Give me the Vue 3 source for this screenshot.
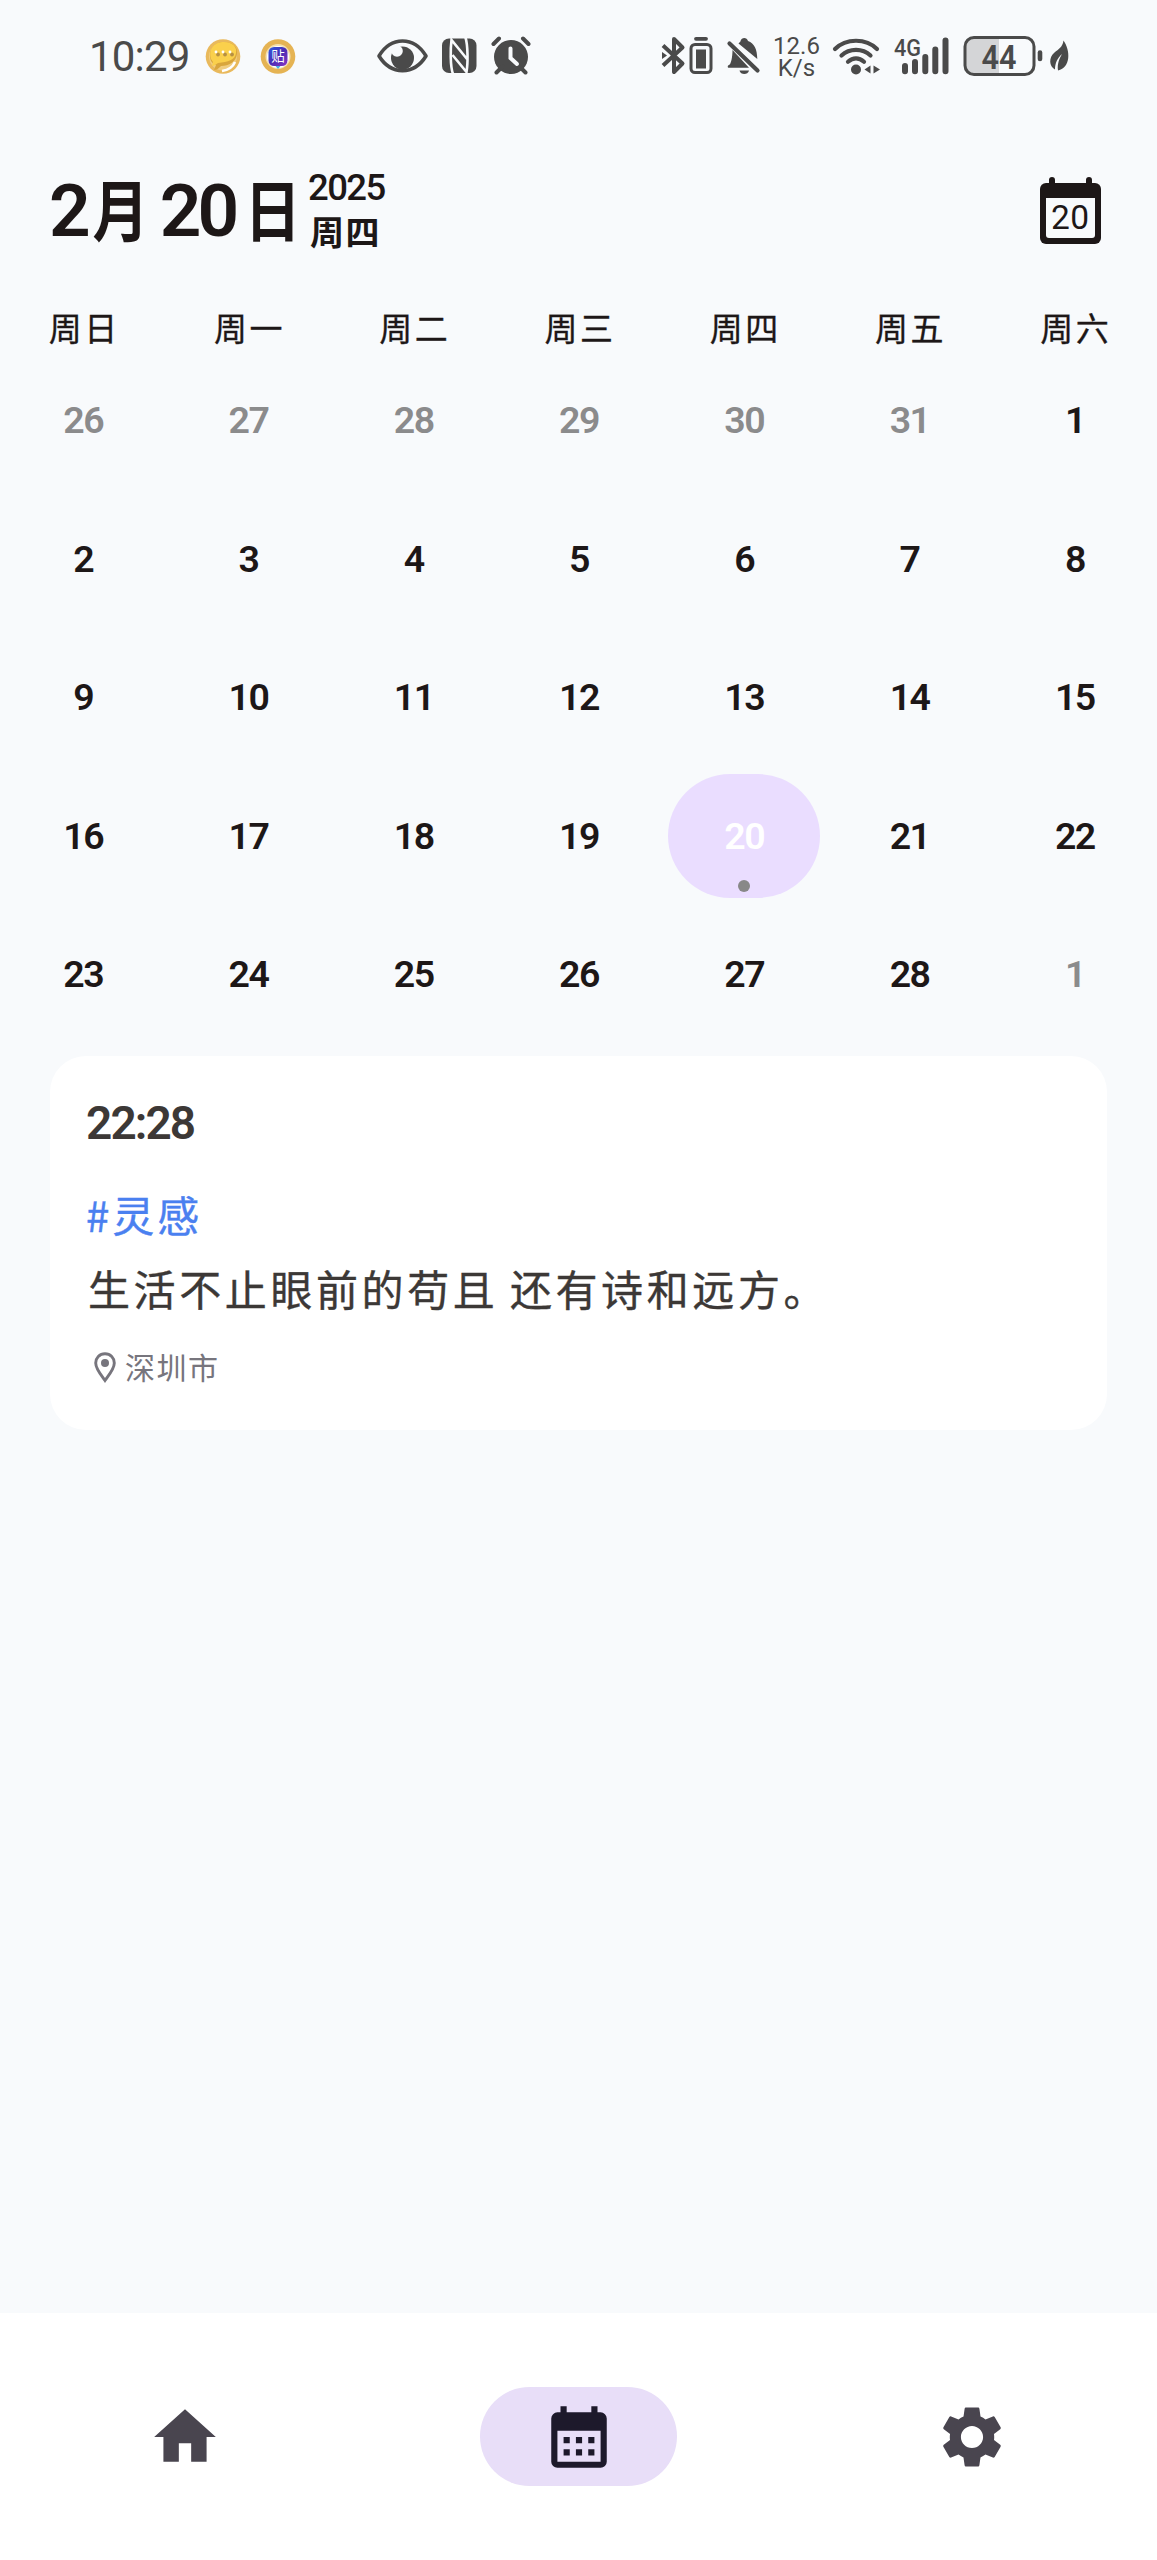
<script setup>
const weekdays = ['周日', '周一', '周二', '周三', '周四', '周五', '周六']
const days = [
  ...[26, 27, 28, 29, 30, 31].map((n) => ({ n, muted: true })),
  ...Array.from({ length: 28 }, (_, i) => ({ n: i + 1, selected: i + 1 === 20 })),
  { n: 1, muted: true },
]
</script>

<template>
  <div class="screen">
    <div class="status">
      <span class="clock">10:29</span>
      <svg width="50" height="60" viewBox="200 25 50 60">
        <circle cx="223" cy="56.500" r="17.300" fill="#e9b95c" />
        <circle cx="223" cy="56.500" r="14" fill="#f0cd80" />
        <path d="M211 61c-4-12 4-19 13-19 9 0 14 5 13 12-1 8-8 12-16 12-3 3-5 4-7 4l2-5c-2-1-4-2-5-4z" fill="#d9a63c" />
        <path d="M211 59c-3-11 4-17 13-17 9 0 13 5 12 11-1 7-8 9-18 10-2 1-4 3-6 3l1-4z" fill="#fad04c" />
        <path d="M222 71c6-1 11-4 13-9" stroke="#fff" stroke-width="2.500" fill="none" />
        <g fill="#b79042"><circle cx="218" cy="54.500" r="1.900" /><circle cx="225" cy="54.500" r="1.900" /><circle cx="232" cy="54.500" r="1.900" /></g>
        <g fill="#fff"><circle cx="216" cy="52" r="1.400" /><circle cx="223" cy="52" r="1.400" /><circle cx="230" cy="52" r="1.400" /></g>
      </svg>
      <svg width="110" height="60" viewBox="250 25 110 60">
        <circle cx="278" cy="56.500" r="17.300" fill="#e5b353" />
        <circle cx="278" cy="56.500" r="12.500" fill="#f3dfb0" />
        <circle cx="278" cy="57" r="11" fill="#fff" />
        <defs><linearGradient id="tie" x1="0" y1="0" x2="1" y2="1"><stop offset="0" stop-color="#2c5be0" /><stop offset=".5" stop-color="#4a2cb4" /><stop offset="1" stop-color="#8a35c4" /></linearGradient></defs>
        <rect x="268.500" y="47" width="19" height="19" rx="5.500" fill="url(#tie)" />
        <path d="M275.500 66h5l-2.500 3z" fill="#49aee6" />
        <text x="271.300" y="61.200" font-size="13.500" fill="#fff" class="cjk">贴</text>
      </svg>
      <svg width="74" height="60" viewBox="360 25 74 60">
        <path d="M379 56c12-20 35-20 47 0-12 19.500-35 19.500-47 0z" fill="none" stroke="#4a4a4a" stroke-width="3.600" stroke-linejoin="round" />
        <circle cx="402.500" cy="58" r="11.500" fill="#4a4a4a" />
        <circle cx="397" cy="51" r="5.800" fill="#f8fafc" />
      </svg>
      <svg width="50" height="60" viewBox="434 25 50 60">
        <rect x="442" y="38.500" width="34.500" height="34.500" rx="7" fill="#4a4a4a" />
        <path d="M453 74c-3-8-2.500-26-1.500-34l15.500 19M465.500 37.500c2.500 8 2.500 26 1 34.500l-14-17" fill="none" stroke="#f8fafc" stroke-width="2.600" />
      </svg>
      <svg width="156" height="60" viewBox="484 25 156 60">
        <circle cx="511" cy="57" r="17" fill="#4a4a4a" />
        <path d="M493.500 44l5.500-5.500M523 38.500l5.500 5.500M496.500 72.500l6-6M519.500 66.500l6 6" stroke="#4a4a4a" stroke-width="4" stroke-linecap="round" />
        <path d="M510.500 48.500V58l6.500 6" fill="none" stroke="#f8fafc" stroke-width="4" stroke-linecap="round" />
      </svg>
      <svg width="47" height="60" viewBox="640 25 47 60">
        <path d="M663 45.500l19.500 18-8.500 8.500V39l8.500 8.500-19.500 18" fill="none" stroke="#4a4a4a" stroke-width="4" stroke-linejoin="round" />
        <path d="M662 52l5 3.500-5 3.500z" fill="#4a4a4a" />
      </svg>
      <svg width="37" height="60" viewBox="687 25 37 60">
        <rect x="691" y="44.500" width="20" height="28" rx="4" fill="none" stroke="#4a4a4a" stroke-width="3" />
        <rect x="696" y="49.500" width="10" height="19" fill="#4a4a4a" />
        <path d="M696 38.800h10" stroke="#4a4a4a" stroke-width="3.800" stroke-linecap="round" />
      </svg>
      <svg width="44" height="60" viewBox="724 25 44 60">
        <path d="M732.500 50L749 67.800H729c-1.800 0-1.500-2.500 0-2.800 2-.6 3.500-8 3.500-15zM738.500 43.500c1.500-1.500 2-2 2-2.500 1-4 6.500-4 7.500 0 6.500 2.500 9 8 9.300 18z" fill="#4a4a4a" />
        <path d="M729.500 43.500l28 27" stroke="#4a4a4a" stroke-width="4.200" stroke-linecap="round" />
        <path d="M739.500 70.500h9.500c-1 4.800-8.500 4.800-9.500 0z" fill="#4a4a4a" />
      </svg>
      <span class="speed"><span>12.6</span><span>K/s</span></span>
      <svg width="62" height="60" viewBox="829 25 62 60">
        <g fill="none" stroke="#4a4a4a" stroke-width="4.200" stroke-linecap="round">
          <path d="M835 49c11-11 31-11 42 0" /><path d="M841.500 55.500c8-7.500 21-7.500 29 0" /><path d="M848 61.800c5-4.500 11-4.500 16 0" />
        </g>
        <circle cx="856" cy="69.500" r="5" fill="#4a4a4a" />
        <path d="M870.500 65.500v8l-6-4zM873.500 65.500v8l6.500-4z" fill="#4a4a4a" />
      </svg>
      <svg width="67" height="60" viewBox="891 25 67 60">
        <text x="894" y="55.500" font-size="23.500" font-weight="500" textLength="27" lengthAdjust="spacingAndGlyphs" fill="#4a4a4a" class="roboto">4G</text>
        <path d="M905 66v5.200M915 62v9.200M925.300 57v14.200M935.300 49.500v21.700M945.500 40.500v30.700" stroke="#4a4a4a" stroke-width="6" stroke-linecap="round" />
      </svg>
      <svg width="88" height="60" viewBox="958 25 88 60">
        <path d="M999 38.500h-25a9 9 0 0 0-9 9v17a9 9 0 0 0 9 9h25z" fill="#d4d5d7" />
        <rect x="965" y="37.500" width="69" height="37" rx="9" fill="none" stroke="#4a4a4a" stroke-width="3" />
        <text x="981.500" y="69" font-size="33.500" font-weight="600" textLength="35" lengthAdjust="spacingAndGlyphs" fill="#4a4a4a" class="roboto">44</text>
        <path d="M1040 52.500v6.500" stroke="#4a4a4a" stroke-width="4.600" stroke-linecap="round" />
      </svg>
      <svg width="40" height="60" viewBox="1046 25 40 60">
        <path d="M1063.500 40.500c7 10 7.500 27-5.500 30-1-7 1.500-12 4-16.500-4.500 4-7 9-7 15.500-6-3-6.500-12-.5-17 4-3.500 8-5 9-12z" fill="#4a4a4a" />
      </svg>
    </div>

    <header class="header">
      <h1 class="date"><span class="num month">2</span><span class="han">月</span><span class="num dayno">20</span><span class="han">日</span></h1>
      <div class="side"><span class="year">2025</span><span class="wd">周四</span></div>
      <svg class="today" width="61" height="67" viewBox="0 0 61 67">
        <path d="M12 3v6M49 3v6" stroke="#1d1717" stroke-width="6" stroke-linecap="round" />
        <rect y="6" width="61" height="61" rx="6" fill="#1d1717" />
        <path d="M6 21h49v37a3 3 0 0 1-3 3H9a3 3 0 0 1-3-3z" fill="#f8fafc" />
        <text x="11" y="52" font-size="33.500" textLength="38" fill="#1d1717" class="roboto">20</text>
      </svg>
    </header>

    <div class="week"><span v-for="w in weekdays" :key="w">{{ w }}</span></div>
    <div class="grid">
      <div v-for="(d, i) in days" :key="i" class="cell">
        <div class="day" :class="{ muted: d.muted, selected: d.selected }">
          <span>{{ d.n }}</span>
          <i v-if="d.selected" class="dot"></i>
        </div>
      </div>
    </div>

    <article class="card">
      <div class="time">22:28</div>
      <div class="tag">#灵感</div>
      <p class="text">生活不止眼前的苟且 还有诗和远方。</p>
      <div class="place">
        <svg width="22" height="31" viewBox="0 0 22 31">
          <path d="M11 1.800C5.500 1.800 1.700 6 1.700 11c0 6 5.800 12.500 9.300 17.500C14.500 23.500 20.300 17 20.300 11c0-5-3.800-9.200-9.300-9.200z" fill="none" stroke="#77757d" stroke-width="2.900" />
          <circle cx="11" cy="11" r="4" fill="#77757d" />
        </svg>
        <span>深圳市</span>
      </div>
    </article>

    <nav class="nav">
      <div class="tab"><svg width="74" height="74" viewBox="0 0 24 24" fill="#49454f"><path d="M10 20v-6h4v6h5v-8h3L12 3 2 12h3v8z" /></svg></div>
      <div class="tab active">
        <svg width="74" height="74" viewBox="0 0 24 24" fill="#1d192b">
          <path fill-rule="evenodd" d="M19 4h-1V2h-2v2H8V2H6v2H5a2 2 0 0 0-2 2v14a2 2 0 0 0 2 2h14a2 2 0 0 0 2-2V6a2 2 0 0 0-2-2zm0 16H5V10h14z" />
          <path d="M7 12h2v2H7zM11 12h2v2h-2zM15 12h2v2h-2zM7 16h2v2H7zM11 16h2v2h-2zM15 16h2v2h-2z" />
        </svg>
      </div>
      <div class="tab">
        <svg width="74" height="74" viewBox="0 0 24 24" fill="#49454f"><path d="M19.140 12.940c.04-.3.06-.61.06-.94 0-.32-.02-.64-.07-.94l2.030-1.580c.18-.14.23-.41.12-.61l-1.920-3.320c-.12-.22-.37-.29-.59-.22l-2.390.96c-.5-.38-1.030-.7-1.620-.94l-.36-2.540c-.04-.24-.24-.41-.48-.41h-3.840c-.24 0-.43.17-.47.41l-.36 2.540c-.59.24-1.130.57-1.620.94l-2.390-.96c-.22-.08-.47 0-.59.22L2.740 8.870c-.12.21-.08.47.12.61l2.030 1.580c-.05.3-.09.63-.09.94s.02.64.07.94l-2.030 1.580c-.18.14-.23.41-.12.61l1.920 3.320c.12.22.37.29.59.22l2.390-.96c.5.38 1.030.7 1.620.94l.36 2.540c.05.24.24.41.48.41h3.840c.24 0 .44-.17.47-.41l.36-2.540c.59-.24 1.130-.56 1.620-.94l2.390.96c.22.08.47 0 .59-.22l1.920-3.320c.12-.22.07-.47-.12-.61l-2.010-1.580zM12 15.600c-1.980 0-3.600-1.620-3.600-3.600s1.620-3.600 3.600-3.600 3.600 1.620 3.600 3.600-1.620 3.600-3.600 3.600z" /></svg>
      </div>
    </nav>
  </div>
</template>

<style>
body { margin: 0; background: #f8fafc; }
</style>

<style scoped>
.screen {
  width: 1157px;
  height: 2560px;
  display: flex;
  flex-direction: column;
  background: #f8fafc;
  color: #1d1717;
  font-family: "Noto Sans CJK SC", sans-serif;
  font-kerning: none;
}
svg { display: block; flex: none; }
.cjk { font-family: "Noto Sans CJK SC", sans-serif; }
.roboto, .num, .year, .day, .time { font-family: Roboto, sans-serif; }
.status { display: flex; align-items: center; height: 60px; padding-top: 25px; color: #4a4a4a; }
.clock { width: 111px; padding-left: 89px; font: 42px/60px Roboto, sans-serif; letter-spacing: -.800px; padding-top: 4px; white-space: nowrap; }
.speed { display: flex; flex-direction: column; width: 61px; text-align: center; font: 24px/22px Roboto, sans-serif; padding-top: 3px; margin-left: -2px; margin-right: 2px; }
.header { display: flex; align-items: flex-start; height: 90px; margin-top: 79px; padding: 0 56px 0 49px; }
.date { display: flex; margin: 0; font-weight: 700; font-size: 73px; line-height: 90px; width: 257px; }
.date .num { letter-spacing: -4px; padding-top: 2px; font-weight: 600; white-space: nowrap; }
.date .month { width: 38px; }
.date .dayno { width: 75px; margin-left: 6px; margin-right: 4px; }
.date .han { width: 68px; text-align: center; font-size: 67px; line-height: 86px; transform: scaleX(.84); }
.side { display: flex; flex-direction: column; margin-left: 2px; font-weight: 700; }
.year { font-size: 36.500px; font-weight: 500; line-height: 40px; letter-spacing: -1.600px; padding-top: 4px; }
.wd { font-size: 34px; line-height: 45px; letter-spacing: 1.500px; padding-left: 2px; }
.today { margin: 13px 0 0 auto; }
.week { display: grid; grid-template-columns: repeat(7, 1fr); height: 97px; }
.week span { text-align: center; font-size: 33px; line-height: 48px; margin-top: 49px; padding-left: 3px; letter-spacing: 2.500px; -webkit-text-stroke: .3px; }
.grid { display: grid; grid-template-columns: repeat(7, 1fr); grid-auto-rows: 138.500px; }
.cell { display: flex; align-items: center; justify-content: center; padding-left: 1px; }
.day { position: relative; width: 152px; height: 124px; border-radius: 62px; text-align: center; font-weight: 600; font-size: 37.500px; line-height: 125px; letter-spacing: -1.500px; }
.muted { color: #8b8b8c; }
.selected { background: #eaddff; color: #fff; }
.dot { position: absolute; left: 70px; bottom: 6px; width: 12px; height: 12px; border-radius: 50%; background: #888; }
.card { box-sizing: border-box; width: 1057px; height: 374px; margin: 12px 50px 0; padding: 32px 36px 0; border-radius: 36px; background: #fff; color: #3c3836; }
.time { font-weight: 600; font-size: 46px; line-height: 70px; letter-spacing: -1.900px; }
.tag { margin-top: 20px; font-size: 42px; line-height: 72px; letter-spacing: 3px; color: #4a80f0; -webkit-text-stroke: .4px; }
.text { margin: 1px 0 0 2px; font-size: 42px; line-height: 74px; letter-spacing: 3.600px; word-spacing: -1.500px; white-space: nowrap; -webkit-text-stroke: .4px; }
.place { display: flex; align-items: center; gap: 9px; margin: 17px 0 0 8px; font-size: 30px; line-height: 48px; letter-spacing: 1.500px; color: #77757d; }
.place svg { margin-top: 4px; }
.nav { display: flex; justify-content: center; gap: 196.500px; height: 247px; margin-top: auto; background: #fff; }
.tab { display: flex; align-items: center; justify-content: center; width: 197px; height: 99px; margin-top: 74px; border-radius: 50px; }
.active { background: #e8def8; }
</style>
